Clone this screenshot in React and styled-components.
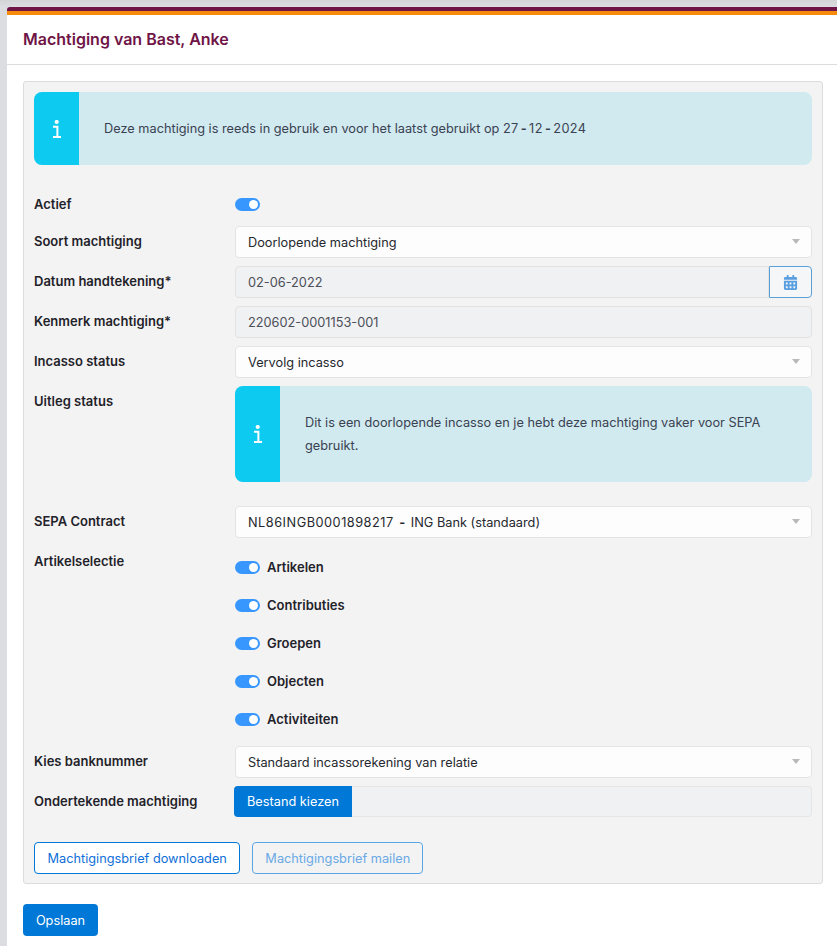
import React from 'react'
import styled, { createGlobalStyle } from 'styled-components'
import { FaCalendarAlt } from 'react-icons/fa'

const Global = createGlobalStyle`
  html, body { margin: 0; padding: 0; background: #dcdde0; }
  body { font-family: Inter, "Liberation Sans", sans-serif; font-size: 12.75px; color: #1f2229; }
  * { box-sizing: border-box; }
`

const Page = styled.div`
  width: 837px;
  height: 946px;
  padding: 7px 0 0 7px;
  overflow: hidden;
  background: linear-gradient(#d3d4d6, #dcdde0 7px);
`
const Card = styled.main`
  height: 939px;
  background: #fff;
  border-top: 4px solid #6f1446;
  border-top-left-radius: 3px;
`
const Stripe = styled.div`
  height: 4px;
  background: #f58a0b;
`
const Header = styled.header`
  height: 50px;
  padding: 0 16px 2px;
  display: flex;
  align-items: center;
  border-bottom: 1px solid #dcdcdc;
`
const Title = styled.h1`
  margin: 0;
  font-size: 16px;
  font-weight: 600;
  color: #6f1446;
`
const Body = styled.div`
  padding: 16px 14px 0 16px;
`
const Panel = styled.section`
  height: 803px;
  padding: 10px;
  background: #f3f3f3;
  border: 1px solid #dcdcdc;
  border-radius: 3px;
`
const Alert = styled.div`
  display: flex;
  height: ${({ $height }) => $height}px;
  background: #d1eaef;
  border-radius: 8px;
  overflow: hidden;
  margin-bottom: ${({ $gap }) => $gap}px;
`
const AlertIcon = styled.div`
  flex: 0 0 45px;
  display: flex;
  align-items: center;
  justify-content: center;
  background: #0dcaf0;
`
const AlertText = styled.p`
  margin: 0;
  align-self: center;
  padding: 0 25px;
  color: #3a4152;
  line-height: 23px;
`
const Spaced = styled.span`
  letter-spacing: ${({ $amount }) => $amount}px;
`
const WideHyphen = styled.span`
  margin: 0 ${({ $side }) => $side}px;
  font-weight: 700;
`
const Row = styled.div`
  display: grid;
  grid-template-columns: 201px 577px;
  min-height: ${({ $height }) => $height || 32}px;
  margin-bottom: ${({ $gap }) => ($gap === undefined ? 8 : $gap)}px;
  align-items: ${({ $top }) => ($top ? 'start' : 'center')};
`
const Label = styled.label`
  font-weight: 600;
  font-size: 13px;
  line-height: ${({ $low }) => ($low ? 30 : 28)}px;
  padding-bottom: ${({ $low }) => ($low ? 0 : 2)}px;
  color: #1f2229;
`
const Select = styled.div`
  position: relative;
  height: 32px;
  padding: 0 12px;
  display: flex;
  align-items: center;
  white-space: pre;
  background: #fdfdfd;
  border: 1px solid #e4e4e4;
  border-radius: 4px;
  color: #25282e;

  &::after {
    content: '';
    position: absolute;
    right: 11px;
    top: 12px;
    border-left: 4.5px solid transparent;
    border-right: 4.5px solid transparent;
    border-top: 5px solid #b9b9b9;
  }
`
const ReadOnly = styled.div`
  flex: 1;
  height: 32px;
  padding: 0 12px;
  display: flex;
  align-items: center;
  background: #f0f1f3;
  border: 1px solid #e2e2e2;
  border-radius: ${({ $joined }) => ($joined ? '4px 0 0 4px' : '4px')};
  color: #4b4f58;
`
const InputGroup = styled.div`
  display: flex;
`
const CalendarButton = styled.button`
  width: 43px;
  height: 32px;
  padding: 0;
  display: flex;
  align-items: center;
  justify-content: center;
  background: #f4f6f8;
  border: 1px solid #5a9fd6;
  border-radius: 0 4px 4px 0;
  color: #5a9fe0;
  font-size: 15px;
`
const ToggleList = styled.div`
  display: flex;
  flex-direction: column;
  gap: 18px;
  padding-top: 11px;
`
const ToggleItem = styled.div`
  display: flex;
  align-items: center;
  gap: 7px;
  height: 20px;
  font-weight: 600;
  font-size: 13px;
  color: #1f2229;
`
const Toggle = styled.span`
  position: relative;
  display: block;
  width: 25px;
  height: 13px;
  border-radius: 7px;
  background: #3797ff;

  &::after {
    content: '';
    position: absolute;
    right: 2px;
    top: 2px;
    width: 9px;
    height: 9px;
    border-radius: 50%;
    background: #fff;
  }
`
const FileInput = styled.div`
  display: flex;
  height: 31px;
  margin: 0 0 1px -1px;
  background: #f0f1f3;
  border: 1px solid #e6e6e6;
  border-left: 0;
  border-radius: 4px;
`
const FileButton = styled.button`
  width: 118px;
  height: 31px;
  margin-top: -1px;
  padding: 0;
  border: 0;
  border-radius: 4px 0 0 4px;
  background: #0078d7;
  color: #fff;
  font: 400 12.75px Inter, "Liberation Sans", sans-serif;
`
const Actions = styled.div`
  display: flex;
  gap: 12px;
  margin-top: 24px;
`
const OutlineButton = styled.button`
  height: 32px;
  padding: 0 12px 0 12.5px;
  border: 1px solid ${({ $disabled }) => ($disabled ? '#5aa5e4' : '#0078d7')};
  border-radius: 4px;
  background: ${({ $disabled }) => ($disabled ? 'transparent' : '#fff')};
  color: ${({ $disabled }) => ($disabled ? '#69a9e6' : '#0f6fd8')};
  font: 400 12.75px Inter, "Liberation Sans", sans-serif;
`
const SaveButton = styled.button`
  display: block;
  width: 75px;
  height: 32px;
  margin-top: 20px;
  padding: 0;
  border: 0;
  border-radius: 4px;
  background: #0078d7;
  color: #fff;
  font: 400 12.75px Inter, "Liberation Sans", sans-serif;
`

const ARTICLE_TOGGLES = ['Artikelen', 'Contributies', 'Groepen', 'Objecten', 'Activiteiten']

const InfoGlyph = () => (
  <svg width="10" height="18" viewBox="0 0 10 18" fill="none" stroke="#fff" strokeWidth="2">
    <circle cx="4.7" cy="2" r="2.1" fill="#fff" stroke="none" />
    <path d="M1 6.8H5.4V17M1 17H9" />
  </svg>
)

export default function App() {
  return (
    <Page>
      <Global />
      <Card>
        <Stripe />
        <Header>
          <Title>Machtiging van Bast, Anke</Title>
        </Header>
        <Body>
          <Panel>
            <Alert $height={73} $gap={24}>
              <AlertIcon><InfoGlyph /></AlertIcon>
              <AlertText>
                Deze machtiging is reeds in gebruik en voor het laatst gebruikt op{' '}
                <Spaced $amount={0.4}>27<WideHyphen $side={2}>-</WideHyphen>12<WideHyphen $side={2}>-</WideHyphen>2024</Spaced>
              </AlertText>
            </Alert>
            <Row $height={20} $gap={7}>
              <Label $low>Actief</Label>
              <Toggle />
            </Row>
            <Row>
              <Label>Soort machtiging</Label>
              <Select>Doorlopende machtiging</Select>
            </Row>
            <Row>
              <Label>Datum handtekening*</Label>
              <InputGroup>
                <ReadOnly $joined>02-06-2022</ReadOnly>
                <CalendarButton><FaCalendarAlt /></CalendarButton>
              </InputGroup>
            </Row>
            <Row>
              <Label>Kenmerk machtiging*</Label>
              <ReadOnly>220602-0001153-001</ReadOnly>
            </Row>
            <Row>
              <Label>Incasso status</Label>
              <Select>Vervolg incasso</Select>
            </Row>
            <Row $top $gap={24}>
              <Label $low>Uitleg status</Label>
              <Alert $height={96} $gap={0}>
                <AlertIcon><InfoGlyph /></AlertIcon>
                <AlertText>Dit is een doorlopende incasso en je hebt deze machtiging vaker voor SEPA gebruikt.</AlertText>
              </Alert>
            </Row>
            <Row>
              <Label>SEPA Contract</Label>
              <Select><span><Spaced $amount={0.5}>NL86INGB0001898217</Spaced> <WideHyphen $side={2}>-</WideHyphen> ING Bank (standaard)</span></Select>
            </Row>
            <Row $top $gap={17}>
              <Label $low>Artikelselectie</Label>
              <ToggleList>
                {ARTICLE_TOGGLES.map(name => (
                  <ToggleItem key={name}><Toggle />{name}</ToggleItem>
                ))}
              </ToggleList>
            </Row>
            <Row>
              <Label>Kies banknummer</Label>
              <Select>Standaard incassorekening van relatie</Select>
            </Row>
            <Row>
              <Label>Ondertekende machtiging</Label>
              <FileInput>
                <FileButton>Bestand kiezen</FileButton>
              </FileInput>
            </Row>
            <Actions>
              <OutlineButton>Machtigingsbrief downloaden</OutlineButton>
              <OutlineButton $disabled>Machtigingsbrief mailen</OutlineButton>
            </Actions>
          </Panel>
          <SaveButton>Opslaan</SaveButton>
        </Body>
      </Card>
    </Page>
  )
}
